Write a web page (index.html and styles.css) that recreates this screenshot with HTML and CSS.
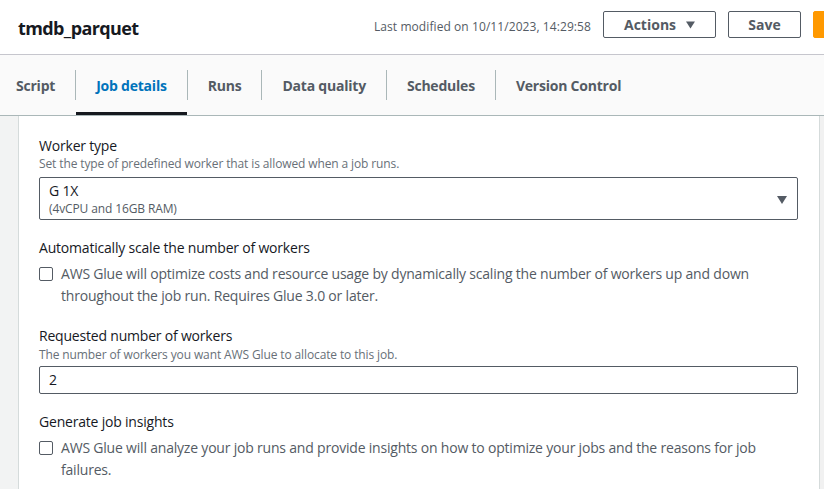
FILE: index.html
```html
<!DOCTYPE html>
<html lang="en">
<head>
<meta charset="utf-8">
<title>tmdb_parquet</title>
<link rel="stylesheet" href="styles.css">
</head>
<body>
<header class="header">
  <h1 class="title">tmdb_parquet</h1>
  <div class="actions">
    <span class="modified">Last modified on 10/11/2023, 14:29:58</span>
    <button class="btn">Actions <svg class="caret" width="10" height="8" viewBox="0 0 10 8"><path d="M0 0H10L5 8Z" fill="#545b64"/></svg></button>
    <button class="btn">Save</button>
    <button class="btn btn-primary" aria-label="Run"></button>
  </div>
</header>
<nav class="tabs">
  <div class="tab">Script</div>
  <div class="tab active">Job details</div>
  <div class="tab">Runs</div>
  <div class="tab">Data quality</div>
  <div class="tab">Schedules</div>
  <div class="tab">Version Control</div>
</nav>
<div class="main">
  <div class="gutter"></div>
  <section class="panel">
    <div class="field">
      <div class="label">Worker type</div>
      <div class="desc">Set the type of predefined worker that is allowed when a job runs.</div>
      <div class="select">
        <div class="select-text">
          <div class="select-value">G 1X</div>
          <div class="select-sub">(4vCPU and 16GB RAM)</div>
        </div>
        <svg class="select-caret" width="10" height="8" viewBox="0 0 10 8"><path d="M0 0H10L5 8Z" fill="#545b64"/></svg>
      </div>
    </div>
    <div class="field">
      <div class="label">Automatically scale the number of workers</div>
      <label class="check">
        <span class="box"></span>
        <span class="check-text">AWS Glue will optimize costs and resource usage by dynamically scaling the number of workers up and down throughout the job run. Requires Glue 3.0 or later.</span>
      </label>
    </div>
    <div class="field">
      <div class="label">Requested number of workers</div>
      <div class="desc desc-tight">The number of workers you want AWS Glue to allocate to this job.</div>
      <div class="input">2</div>
    </div>
    <div class="field">
      <div class="label">Generate job insights</div>
      <label class="check">
        <span class="box"></span>
        <span class="check-text">AWS Glue will analyze your job runs and provide insights on how to optimize your jobs and the reasons for job failures.</span>
      </label>
    </div>
  </section>
  <div class="scrollbar"></div>
</div>
</body>
</html>
```
FILE: styles.css
```css
html, body {
  margin: 0;
  padding: 0;
  height: 489px;
  overflow: hidden;
  background: #ffffff;
  font-family: "Open Sans", "Noto Sans", Arial, sans-serif;
  color: #16191f;
}

.header {
  display: flex;
  align-items: center;
  height: 54px;
  border-bottom: 1px solid #c6c6cd;
  padding-left: 18px;
  overflow: hidden;
}

.title {
  margin: 0;
  font-size: 18px;
  font-weight: 700;
  letter-spacing: -0.6px;
  color: #16191f;
  flex: 1 1 auto;
  white-space: nowrap;
  padding-top: 1px;
}

.actions {
  display: flex;
  align-items: center;
  gap: 12px;
  margin-right: -89px;
  align-self: flex-start;
  padding-top: 11px;
}

.modified {
  font-size: 12px;
  letter-spacing: 0.08px;
  color: #545b64;
  white-space: nowrap;
  padding-top: 4px;
}

.btn {
  box-sizing: border-box;
  height: 27px;
  border: 1px solid #545b64;
  border-radius: 2px;
  background: #ffffff;
  color: #545b64;
  font-family: inherit;
  font-size: 14px;
  font-weight: 700;
  padding: 0 20px;
  display: flex;
  align-items: center;
  gap: 10px;
  white-space: nowrap;
  flex-shrink: 0;
}

.actions .btn:nth-of-type(1) { width: 113px; justify-content: center; }
.actions .btn:nth-of-type(2) { width: 73px; justify-content: center; }

.btn-primary {
  width: 100px;
  background: #ff9900;
  border-color: #ff9900;
}

.caret { display: block; }

.tabs {
  display: flex;
  align-items: center;
  height: 60px;
  background: #fafafa;
  border-bottom: 1px solid #aab7b8;
}

.tab {
  position: relative;
  height: 60px;
  box-sizing: border-box;
  display: flex;
  align-items: center;
  padding: 0 20px 0 21px;
  font-size: 14px;
  font-weight: 700;
  letter-spacing: -0.22px;
  color: #545b64;
  white-space: nowrap;
}

.tab:first-child { padding-left: 16px; padding-right: 20px; }

.tab + .tab::before {
  content: "";
  position: absolute;
  left: 0;
  top: 15px;
  height: 30px;
  width: 1px;
  background: #aab7b8;
}

.tab.active {
  color: #0073bb;
}

.tab.active::after {
  content: "";
  position: absolute;
  left: 1px;
  right: 0;
  bottom: 0;
  height: 3px;
  background: #16191f;
}

.main {
  display: flex;
  height: 373px;
}

.gutter {
  width: 18px;
  flex-shrink: 0;
  background: #f2f3f3;
  border-right: 1px solid #d5dbdb;
}

.panel {
  flex: 1 1 auto;
  padding: 20px 21px 0 20px;
  display: flex;
  flex-direction: column;
  gap: 18px;
  overflow: hidden;
}

.scrollbar {
  width: 4px;
  flex-shrink: 0;
  background: #f1f1f1;
  border-left: 1px solid #d5dbdb;
}

.field {
  display: flex;
  flex-direction: column;
}

.label {
  font-size: 14px;
  line-height: 20px;
  letter-spacing: -0.2px;
  color: #16191f;
}

.desc {
  font-size: 12px;
  line-height: 16px;
  letter-spacing: -0.12px;
  color: #687078;
  margin-bottom: 5px;
}

.field:nth-child(3) { padding-top: 1px; }

.desc-tight { margin-top: 1px; margin-bottom: 3px; }

.select {
  box-sizing: border-box;
  height: 43px;
  border: 1px solid #545b64;
  border-radius: 2px;
  display: flex;
  align-items: center;
  justify-content: space-between;
  padding: 0 10px 0 9px;
}

.select-value {
  font-size: 14px;
  line-height: 20px;
  letter-spacing: -0.2px;
  color: #16191f;
}

.select-sub {
  font-size: 12px;
  line-height: 16px;
  letter-spacing: -0.12px;
  color: #545b64;
}

.select-caret { display: block; margin-top: 2px; }

.input {
  box-sizing: border-box;
  height: 28px;
  border: 1px solid #545b64;
  border-radius: 2px;
  padding: 0 9px;
  font-size: 14px;
  line-height: 26px;
  color: #16191f;
}

.check {
  display: flex;
  align-items: flex-start;
  gap: 8px;
  margin-top: 5px;
}

.box {
  box-sizing: border-box;
  flex-shrink: 0;
  width: 14px;
  height: 14px;
  margin-top: 4px;
  border: 1px solid #545b64;
  border-radius: 2px;
  background: #ffffff;
}

.check-text {
  font-size: 14px;
  line-height: 22px;
  letter-spacing: -0.2px;
  color: #545b64;
}
```
